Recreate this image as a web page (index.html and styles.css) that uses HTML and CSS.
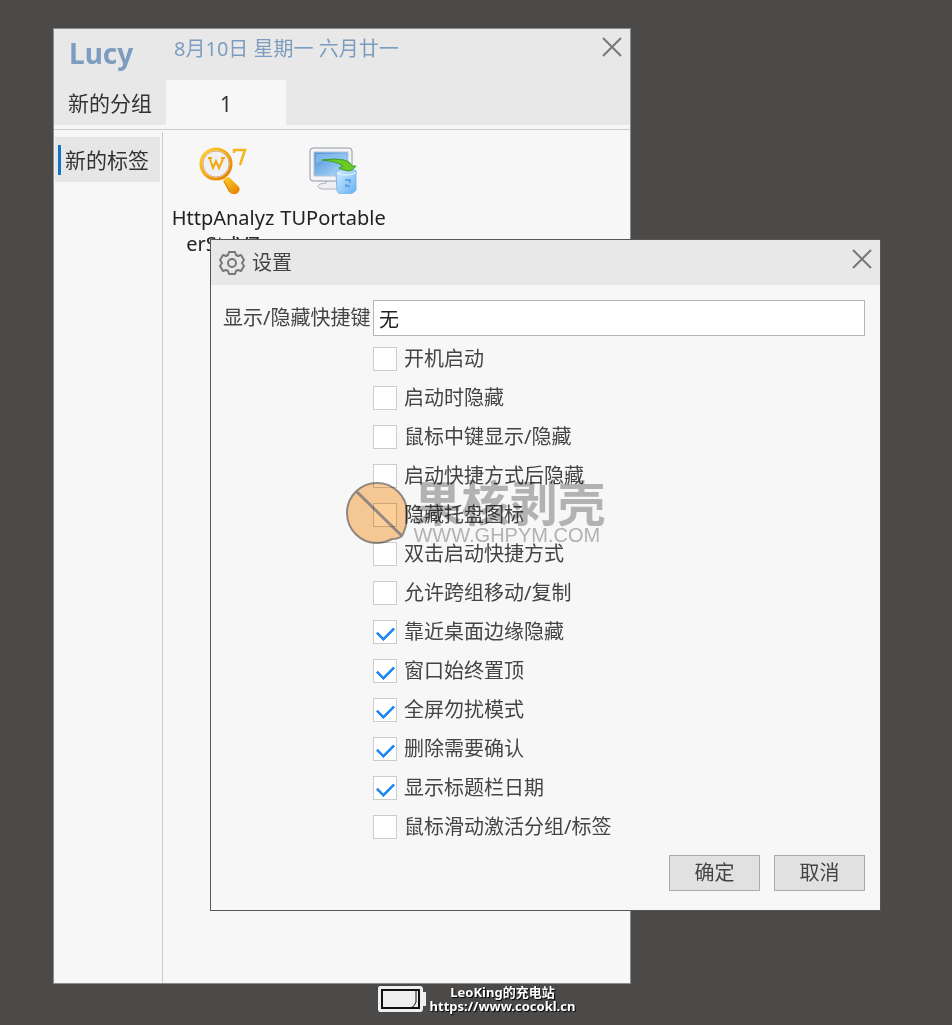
FILE: index.html
```html
<!DOCTYPE html>
<html lang="zh-CN">
<head>
    <meta charset="UTF-8">
    <meta name="viewport" content="width=device-width, initial-scale=1.0">
    <title>Lucy</title>
    <link rel="stylesheet" href="styles.css">
</head>
<body>

    <!-- Launcher window -->
    <main class="window launcher">
        <header class="launcher-header">
            <div class="title-row">
                <h1>Lucy</h1>
                <span class="date">8月10日 星期一 六月廿一</span>
                <button class="close" type="button" aria-label="关闭">
                    <svg width="20" height="20" viewBox="0 0 20 20"><path d="M1 1L19 19M19 1L1 19"/></svg>
                </button>
            </div>
            <nav class="groups">
                <button class="group" type="button">新的分组</button>
                <button class="group active" type="button">1</button>
            </nav>
        </header>
        <div class="launcher-body">
            <aside class="tags">
                <button class="tag" type="button">新的标签</button>
            </aside>
            <section class="apps">
                <div class="app">
                    <svg width="48" height="48" viewBox="0 0 48 48">
                        <defs>
                            <linearGradient id="gold" x1="0" y1="0" x2="1" y2="1">
                                <stop offset="0" stop-color="#ffd52e"/>
                                <stop offset="1" stop-color="#e47a00"/>
                            </linearGradient>
                        </defs>
                        <path d="M24 35Q26 31 30 31L40 41Q42 45 37 48Q33 49 30 46Z" fill="url(#gold)"/>
                        <path d="M25 35L31 46" stroke="#d97a08" stroke-width="1"/>
                        <circle cx="17" cy="18" r="15" fill="#f1f0f4" stroke="url(#gold)" stroke-width="3"/>
                        <circle cx="17" cy="18" r="13" fill="none" stroke="#d8b078"/>
                        <path d="M11 13L14 22L17 15L20 22L24 13M9 12H13M22 12H26" fill="none" stroke="#f3a80c" stroke-width="2"/>
                        <path d="M35 7V4H46L41 19" fill="none" stroke="#f3b51b" stroke-width="2.5"/>
                    </svg>
                    <span>HttpAnalyzerStdV7</span>
                </div>
                <div class="app">
                    <svg width="48" height="48" viewBox="0 0 48 48">
                        <defs>
                            <linearGradient id="screen" x1="0" y1="0" x2="1" y2="1">
                                <stop offset="0" stop-color="#4a90d4"/>
                                <stop offset="1" stop-color="#b7e0ff"/>
                            </linearGradient>
                            <linearGradient id="bin" x1="0" y1="0" x2="1" y2="1">
                                <stop offset="0" stop-color="#d4edff"/>
                                <stop offset="1" stop-color="#64b0f1"/>
                            </linearGradient>
                        </defs>
                        <path d="M17 34H27L29 38Q34 40 29 43H13Q6 41 11 38L17 37Z" fill="#eef0f3" stroke="#b0b2b6"/>
                        <rect x="1" y="2" width="42" height="33" rx="3" fill="#f4f5f8" stroke="#92969c"/>
                        <rect x="5" y="6" width="34" height="24" fill="url(#screen)" stroke="#b9c4d1"/>
                        <path d="M7 8H37V14Q22 10 7 17Z" fill="#9ccdf5" opacity=".5"/>
                        <path d="M27 27Q27 24 31 24H45Q48 24 47 29V44Q44 49 34 48Q28 48 28 44Z" fill="url(#bin)" stroke="#7ab5e8"/>
                        <path d="M28 27Q36 31 47 27" fill="none" stroke="#eaf6ff"/>
                        <path d="M36 34H41V37M41 40H37V38" fill="none" stroke="#4a99e2" stroke-width="1.5"/>
                        <path d="M13 14Q26 12 35 14Q41 15 43 20L47 20Q44 25 39 25Q34 24 30 22L34 20Q27 15 13 14Z" fill="#6acb27" stroke="#3f9d27"/>
                    </svg>
                    <span>TUPortable</span>
                </div>
            </section>
        </div>
    </main>

    <!-- Settings dialog -->
    <div class="window dialog" role="dialog" aria-labelledby="dialog-title">
        <header class="dialog-header">
            <svg class="gear" width="26" height="26" viewBox="0 0 26 26">
                <path d="M10 2H16L17 5L19 6L22 5L25 10L23 13L25 16L22 21L19 20L17 21L16 24H10L9 21L7 20L4 21L1 16L3 13L1 10L4 5L7 6L9 5Z"/>
                <circle cx="13" cy="13" r="4"/>
            </svg>
            <h2 id="dialog-title">设置</h2>
            <button class="close" type="button" aria-label="关闭">
                <svg width="20" height="20" viewBox="0 0 20 20"><path d="M1 1L19 19M19 1L1 19"/></svg>
            </button>
        </header>
        <form class="settings">
            <div class="field">
                <label for="hotkey">显示/隐藏快捷键</label>
                <input type="text" id="hotkey" value="无">
            </div>
            <div class="options">
                <label><input type="checkbox">开机启动</label>
                <label><input type="checkbox">启动时隐藏</label>
                <label><input type="checkbox">鼠标中键显示/隐藏</label>
                <label><input type="checkbox">启动快捷方式后隐藏</label>
                <label><input type="checkbox">隐藏托盘图标</label>
                <label><input type="checkbox">双击启动快捷方式</label>
                <label><input type="checkbox">允许跨组移动/复制</label>
                <label><input type="checkbox" checked>靠近桌面边缘隐藏</label>
                <label><input type="checkbox" checked>窗口始终置顶</label>
                <label><input type="checkbox" checked>全屏勿扰模式</label>
                <label><input type="checkbox" checked>删除需要确认</label>
                <label><input type="checkbox" checked>显示标题栏日期</label>
                <label><input type="checkbox">鼠标滑动激活分组/标签</label>
            </div>
            <div class="actions">
                <button type="button">确定</button>
                <button type="button">取消</button>
            </div>
        </form>
    </div>

    <!-- Site marks -->
    <div class="watermark">
        <svg width="64" height="64" viewBox="0 0 64 64">
            <path d="M56 55Q62 43 61 32A30 30 0 1 0 31 62Q38 62 46 58Q52 58 56 55Z" fill="#fdcf98" stroke="#958b85" stroke-width="2"/>
            <path d="M10 10L56 55" stroke="#958b85" stroke-width="3"/>
        </svg>
        <div class="watermark-text">
            <strong>果核剥壳</strong>
            <span>WWW.GHPYM.COM</span>
        </div>
    </div>

    <footer>
        <svg width="50" height="28" viewBox="0 0 50 28">
            <path d="M3 1H43Q46 1 46 4V7H49V21H46V24Q46 27 43 27H3Q1 27 1 24V4Q1 1 3 1Z" fill="#efefef"/>
            <rect x="5" y="5" width="37" height="18" fill="#efefef" stroke="#111" stroke-width="2"/>
            <path d="M39 5V17Q38 21 34 23" fill="none" stroke="#111"/>
        </svg>
        <p>LeoKing的充电站<br>https://www.cocokl.cn</p>
    </footer>

</body>
</html>
```
FILE: styles.css
```css
* {
    box-sizing: border-box;
}

body {
    position: relative;
    margin: 0;
    min-height: 100vh;
    background-color: #4b4a48;
    color: #444;
    font-family: "Noto Sans", "Noto Sans CJK SC", sans-serif;
    font-size: 20px;
    line-height: 26px;
}

h1, h2, p {
    margin: 0;
}

button, input {
    font: inherit;
    color: inherit;
}

/* Windows on the desktop */
.window {
    position: absolute;
    background-color: #f7f7f7;
}

.launcher {
    top: 28px;
    bottom: 41px;
    left: 53px;
    right: 321px;
    display: flex;
    flex-direction: column;
    border: 1px solid #8c8c8b;
}

.dialog {
    top: 239px;
    left: 210px;
    right: 71px;
    border: 1px solid #555;
}

.close {
    display: flex;
    margin-left: auto;
    padding: 0;
    border: 0;
    background: none;
}

.close svg {
    stroke: #777;
    stroke-width: 2;
}

/* Launcher */
.launcher-header {
    background-color: #e8e8e8;
}

.title-row {
    display: flex;
    align-items: flex-start;
    height: 51px;
    padding: 8px;
    padding-left: 15px;
    color: #7d9dc0;
}

h1 {
    width: 105px;
    font-size: 28px;
    line-height: 32px;
}

.date {
    line-height: 24px;
}

.groups {
    display: flex;
}

.group {
    height: 45px;
    width: 120px;
    padding: 3px 0 0;
    border: 0;
    background: none;
    color: #333;
    font-size: 21px;
}

.group:first-child {
    width: 112px;
    padding-top: 0;
}

.group.active {
    background-color: #f7f7f7;
}

.launcher-body {
    display: flex;
    flex: 1;
    margin-top: 4px;
    border-top: 1px solid #ccc;
}

.tags {
    width: 109px;
    margin-top: 2px;
    padding: 5px 2px 0 1px;
    border-right: 1px solid #ccc;
}

.tag {
    display: flex;
    align-items: center;
    width: 100%;
    height: 45px;
    padding: 0 3px;
    border: 0;
    background-color: #e6e6e6;
    color: #333;
    font-size: 21px;
    white-space: nowrap;
}

.tag::before {
    content: "";
    width: 3px;
    height: 30px;
    margin-right: 4px;
    background-color: #1373c6;
}

.apps {
    display: flex;
    align-items: flex-start;
    gap: 4px;
    padding: 16px 7px;
}

.app {
    display: flex;
    flex-direction: column;
    align-items: center;
    gap: 11px;
    width: 106px;
    color: #222;
    text-align: center;
    word-break: break-all;
}

/* Settings dialog */
.dialog-header {
    display: flex;
    align-items: center;
    height: 45px;
    padding: 0 8px;
    background-color: #e8e8e8;
}

.dialog-header .close {
    align-self: flex-start;
    margin-top: 9px;
}

.gear {
    margin-right: 7px;
    fill: none;
    stroke: #777;
    stroke-width: 2;
    stroke-linejoin: round;
}

h2 {
    font-size: 20px;
    font-weight: 400;
}

.settings {
    padding: 15px 15px 19px 12px;
}

.field {
    display: grid;
    grid-template-columns: 150px 1fr;
    align-items: center;
    white-space: nowrap;
}

.field input {
    width: 100%;
    height: 36px;
    padding: 0 5px;
    border: 1px solid #b5b5b5;
    background-color: #fff;
    color: #222;
}

.options {
    display: flex;
    flex-direction: column;
    align-items: flex-start;
    gap: 15px;
    margin: 11px 0 16px 150px;
}

.options label {
    display: flex;
    align-items: center;
    gap: 7px;
    height: 24px;
}

.options input {
    appearance: none;
    display: flex;
    justify-content: center;
    width: 24px;
    height: 24px;
    margin: 0;
    border: 1px solid #ccc;
    background-color: #fff;
}

.options input:checked::after {
    content: "";
    width: 8px;
    height: 14px;
    margin-top: 2px;
    border: solid #1e88f5;
    border-width: 0 3px 3px 0;
    border-radius: 1px;
    transform: rotate(45deg);
}

.actions {
    display: flex;
    justify-content: flex-end;
    gap: 14px;
}

.actions button {
    width: 91px;
    height: 36px;
    padding: 0;
    border: 1px solid #aaa;
    background-color: #e1e1e1;
}

/* Site marks */
.watermark {
    position: absolute;
    inset: 0;
    display: flex;
    align-items: center;
    justify-content: center;
    gap: 3px;
    color: #b8b8b8;
    mix-blend-mode: multiply;
    pointer-events: none;
}

.watermark-text {
    display: flex;
    flex-direction: column;
}

.watermark strong {
    font-size: 48px;
    line-height: 44px;
}

.watermark span {
    font-family: "Liberation Sans", Arial, sans-serif;
    font-size: 20px;
    line-height: 20px;
}

footer {
    position: absolute;
    bottom: 12px;
    left: 0;
    right: 0;
    display: flex;
    align-items: center;
    justify-content: center;
    gap: 3px;
    color: #fff;
    font-size: 13px;
    font-weight: 700;
    line-height: 14px;
    text-align: center;
    text-shadow: 1px 1px 1px #000;
}
```
